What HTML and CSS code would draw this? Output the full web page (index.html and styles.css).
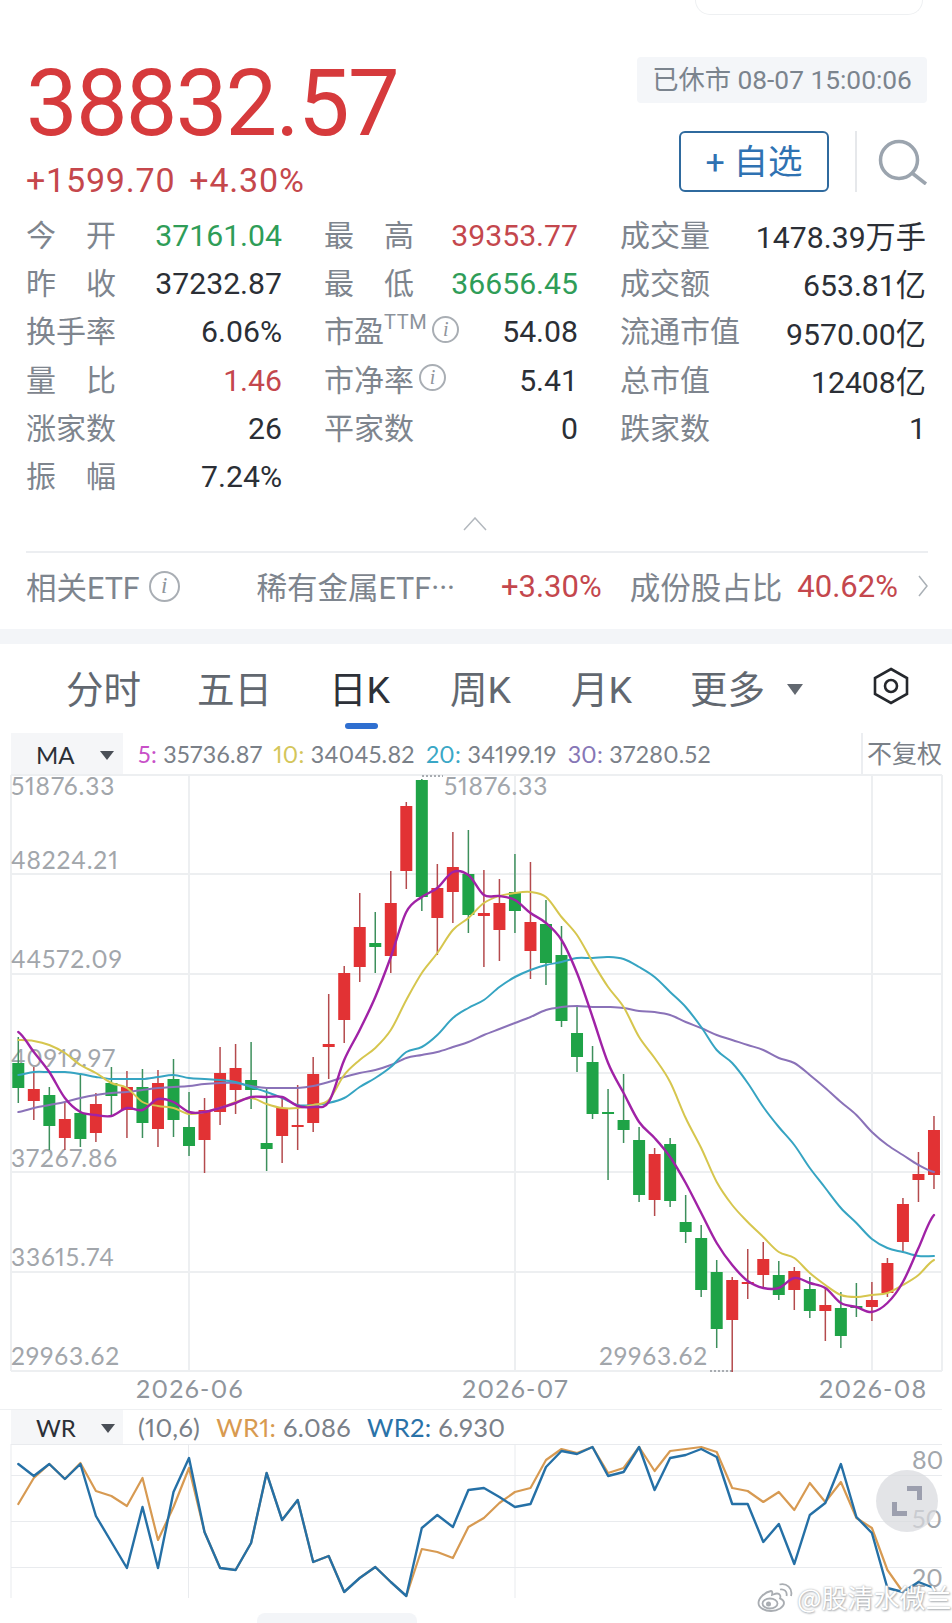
FILE: index.html
```html
<!DOCTYPE html>
<html lang="zh">
<head>
<meta charset="utf-8">
<title>行情</title>
<link rel="stylesheet" href="styles.css">
</head>
<body>
<main class="page">
  <div class="top-tab"></div>

  <section class="quote">
    <div class="quote-left">
      <div class="price">38832.57</div>
      <div class="change"><span>+1599.70</span><span>+4.30%</span></div>
    </div>
    <div class="quote-right">
      <div class="status">已休市 08-07 15:00:06</div>
      <div class="actions">
        <button class="watch"><span class="plus">+</span> 自选</button>
        <span class="vsep"></span>
        <svg class="search" viewBox="0 0 50 46" width="50" height="46"><circle cx="21" cy="21" r="18.5"/><path d="M34 34 L48 45"/></svg>
      </div>
    </div>
  </section>

  <section class="stats">
    <div class="stat"><span class="label two">今开</span><span class="value down">37161.04</span></div>
    <div class="stat"><span class="label two">最高</span><span class="value up">39353.77</span></div>
    <div class="stat"><span class="label">成交量</span><span class="value">1478.39万手</span></div>

    <div class="stat"><span class="label two">昨收</span><span class="value">37232.87</span></div>
    <div class="stat"><span class="label two">最低</span><span class="value down">36656.45</span></div>
    <div class="stat"><span class="label">成交额</span><span class="value">653.81亿</span></div>

    <div class="stat"><span class="label">换手率</span><span class="value">6.06%</span></div>
    <div class="stat"><span class="label">市盈<sup class="ttm">TTM</sup><i class="info small">i</i></span><span class="value">54.08</span></div>
    <div class="stat"><span class="label">流通市值</span><span class="value">9570.00亿</span></div>

    <div class="stat"><span class="label two">量比</span><span class="value up">1.46</span></div>
    <div class="stat"><span class="label">市净率<i class="info small">i</i></span><span class="value">5.41</span></div>
    <div class="stat"><span class="label">总市值</span><span class="value">12408亿</span></div>

    <div class="stat"><span class="label">涨家数</span><span class="value">26</span></div>
    <div class="stat"><span class="label">平家数</span><span class="value">0</span></div>
    <div class="stat"><span class="label">跌家数</span><span class="value">1</span></div>

    <div class="stat"><span class="label two">振幅</span><span class="value">7.24%</span></div>
  </section>

  <div class="collapse">
    <svg viewBox="0 0 24 14" width="24" height="14"><path d="M1 13 L12 1 L23 13"/></svg>
  </div>

  <section class="etf">
    <span class="etf-label">相关ETF<i class="info">i</i></span>
    <span class="etf-name">稀有金属ETF···</span>
    <span class="etf-pct up">+3.30%</span>
    <span class="etf-share">成份股占比</span>
    <span class="etf-ratio up">40.62%</span>
    <svg class="etf-arrow" viewBox="0 0 10 22" width="10" height="22"><path d="M1 1 L9 11 L1 21"/></svg>
  </section>

  <div class="band"></div>

  <nav class="tabs">
    <span class="tab">分时</span>
    <span class="tab">五日</span>
    <span class="tab active">日K</span>
    <span class="tab">周K</span>
    <span class="tab">月K</span>
    <span class="tab more">更多<b class="caret"></b></span>
    <svg class="hex" viewBox="0 0 36 38" width="36" height="38"><path d="M18 2 L34 11 L34 27 L18 36 L2 27 L2 11 Z"/><circle cx="18" cy="19" r="6"/></svg>
  </nav>

  <section class="charts">
    <div class="legend main-legend">
      <div class="picker">MA<b class="tri"></b></div>
      <div class="legend-items">
        <span><em class="c5">5:</em> 35736.87</span>
        <span><em class="c10">10:</em> 34045.82</span>
        <span><em class="c20">20:</em> 34199.19</span>
        <span><em class="c30">30:</em> 37280.52</span>
      </div>
      <div class="adjust">不复权</div>
    </div>

    <svg id="kline" class="kline" viewBox="0 775 952 634" width="952" height="634">
      <g class="grid">
        <path d="M11 775H942 M11 874H942 M11 974H942 M11 1073H942 M11 1172H942 M11 1272H942 M11 1371H942"/>
        <path d="M11 775V1371 M189 775V1371 M515 775V1371 M872 775V1371 M942 775V1371"/>
      </g>
      <g class="axis">
        <text x="11" y="795">51876.33</text>
        <text x="11" y="869">48224.21</text>
        <text x="11" y="968">44572.09</text>
        <text x="11" y="1067">40919.97</text>
        <text x="11" y="1167">37267.86</text>
        <text x="11" y="1266">33615.74</text>
        <text x="11" y="1365">29963.62</text>
        <text x="444" y="795">51876.33</text>
        <text x="599" y="1365">29963.62</text>
      </g>
      <path class="leader" d="M422 776H443 M710 1371H732"/>
      <g class="dates">
        <text x="136" y="1398">2026-06</text>
        <text x="462" y="1398">2026-07</text>
        <text x="819" y="1398">2026-08</text>
      </g>
    </svg>

    <div class="legend wr-legend">
      <div class="picker">WR<b class="tri"></b></div>
      <div class="legend-items">
        <span>(10,6)</span>
        <span><em class="c-wr1">WR1:</em> 6.086</span>
        <span><em class="c-wr2">WR2:</em> 6.930</span>
      </div>
    </div>

    <svg id="wr" class="wr" viewBox="0 1444 952 179" width="952" height="179">
      <g class="grid thin">
        <path d="M11 1444.5H942 M11 1475.5H942 M11 1521.5H942 M11 1567.5H942"/>
        <path d="M11 1444V1598 M188.5 1444V1598 M515 1444V1598"/>
      </g>
      <g class="wr-axis">
        <text x="912" y="1469">80</text>
        <text x="912" y="1528">50</text>
        <text x="912" y="1587">20</text>
      </g>
    </svg>

    <button class="expand" aria-label="全屏">
      <svg viewBox="0 0 32 32" width="32" height="32"><path d="M16 1H31V15H26V6H16Z"/><path d="M1 17H6V26H16V31H1Z"/></svg>
    </button>

    <div class="watermark">
      <svg viewBox="0 0 36 30" width="36" height="30"><path class="wb" d="M14 9C8 10 1.500 16 1.500 21C1.500 26 8 29 14 29C21 29 27 25 27 21C27 18 24 17 23 16.500C24 14 23 11.500 20 11.500C18 11.500 16.500 12.500 15 13C15.500 10.500 15.500 9 14 9Z"/><ellipse class="wb" cx="13" cy="21.500" rx="7.500" ry="5"/><circle class="wb-dot" cx="11.500" cy="22" r="2.500"/><path class="wb" d="M23 7.500C27 6.500 30.500 9.500 29.500 14 M22.500 2.500C29.500 0.500 36 6.500 34 14"/></svg>
      <span>@股清水微兰</span>
    </div>

    <div class="home-bar"></div>
  </section>
</main>
<script src="chart.js"></script>
</body>
</html>
```

FILE: styles.css
```css
* { box-sizing: border-box; }
html, body { margin: 0; padding: 0; background: #fff; }
body {
  width: 952px;
  height: 1623px;
  overflow: hidden;
  font-family: Roboto, "Noto Sans CJK SC", sans-serif;
  color: #2b2f36;
}
.page { width: 952px; }

.top-tab {
  width: 228px;
  height: 15px;
  margin-left: 695px;
  border: 1px solid #eef0f2;
  border-top: 0;
  border-radius: 0 0 26px 26px;
}

.quote {
  height: 196px;
  display: flex;
  justify-content: space-between;
  padding-left: 26px;
}
.price {
  margin-top: 43px;
  font-size: 92px;
  line-height: 92px;
  letter-spacing: -1.800px;
  color: #d63a3c;
}
.change {
  display: flex;
  gap: 14px;
  margin-top: 11px;
  font-size: 34px;
  line-height: 38px;
  letter-spacing: .8px;
  color: #c5474c;
}
.quote-right { width: 315px; }
.status {
  margin-top: 42px;
  width: 290px;
  height: 46px;
  border-radius: 4px;
  background: #f4f6f9;
  color: #7b848e;
  font-size: 26.300px;
  line-height: 46px;
  text-align: center;
  white-space: nowrap;
}
.actions {
  display: flex;
  align-items: center;
  margin-top: 28px;
  margin-left: 42px;
  height: 61px;
}
.watch {
  width: 150px;
  height: 61px;
  padding: 0;
  border: 2px solid #2f6a9e;
  border-radius: 6px;
  background: #fff;
  color: #2f72b2;
  font: inherit;
  font-size: 34.500px;
  line-height: 54px;
}
.plus { font-size: 34px; }
.vsep {
  width: 2px;
  height: 61px;
  margin-left: 26px;
  background: #e6e8eb;
}
.search {
  margin-left: 21px;
  fill: none;
  stroke: #9ba4ae;
  stroke-width: 3.500;
}

.stats {
  display: grid;
  grid-template-columns: 256px 254px 306px;
  column-gap: 42px;
  grid-auto-rows: 48.300px;
  padding-left: 26px;
  height: 290px;
}
.stat {
  display: flex;
  justify-content: space-between;
  align-items: center;
  white-space: nowrap;
}
.label {
  display: flex;
  align-items: center;
  margin-top: -5px;
  color: #7e858e;
  font-size: 30px;
}
.label.two {
  display: block;
  width: 90px;
  text-align-last: justify;
}
.value { font-size: 30.200px; color: #2b2f36; }
.value.up, .up { color: #c4474d; }
.value.down { color: #2f9d58; }
.ttm {
  align-self: flex-start;
  font-size: 20px;
  line-height: 28px;
  margin-top: 1px;
  color: #8c939b;
  letter-spacing: .6px;
}
.info {
  display: inline-block;
  flex: none;
  width: 31px;
  height: 31px;
  margin-left: 9px;
  border: 2px solid #a9aeb4;
  border-radius: 50%;
  color: #8f959c;
  font-family: "Liberation Serif", serif;
  font-size: 23px;
  line-height: 26px;
  text-align: center;
}
.info.small {
  width: 27px;
  height: 27px;
  margin-left: 5px;
  font-size: 20px;
  line-height: 23px;
}

.collapse {
  height: 50px;
  padding: 16px 0 0 463px;
}
.collapse svg { display: block; fill: none; stroke: #b3b8be; stroke-width: 1.500; }

.etf {
  height: 78px;
  margin: 0 24px 0 26px;
  padding-bottom: 10px;
  border-top: 2px solid #eceef1;
  display: flex;
  align-items: center;
  font-size: 30.500px;
  color: #7e858e;
  white-space: nowrap;
}
.etf-label { width: 231px; display: flex; align-items: center; }
.etf-name { width: 245px; }
.etf-pct { width: 129px; font-size: 31px; }
.etf-share { width: 168px; }
.etf-ratio { width: 121px; font-size: 31px; }
.etf-arrow { fill: none; stroke: #aab0b6; stroke-width: 1.500; }

.band { height: 15px; background: #f3f5f8; }

.tabs {
  position: relative;
  height: 89px;
  padding: 0 43px 5px 66px;
  display: grid;
  grid-template-columns: 131px 132px 121px 121px 119px 1fr auto;
  align-items: center;
  font-size: 37.500px;
  color: #626870;
}
.tab { white-space: nowrap; }
.tab.active { color: #2d3138; }
.tab.active::after {
  content: "";
  position: absolute;
  left: 345px;
  top: 79px;
  width: 33px;
  height: 6px;
  border-radius: 3px;
  background: #2f6fd0;
}
.more { display: flex; align-items: center; }
.caret {
  margin: 6px 0 0 22px;
  border: 8px solid transparent;
  border-top: 11px solid #626870;
  border-bottom: 0;
}
.hex { fill: none; stroke: #25282d; stroke-width: 2.600; }

.charts {
  position: relative;
  font-family: Lato, "Noto Sans CJK SC", sans-serif;
  font-variant-numeric: proportional-nums;
}
.legend {
  display: flex;
  align-items: center;
  font-size: 23.300px;
  letter-spacing: .3px;
  color: #7a8088;
  white-space: nowrap;
}
.legend em { font-style: normal; }
.main-legend { height: 42px; margin-right: 10px; }
.wr-legend {
  height: 35px;
  margin-right: 10px;
  border-top: 1px solid #eef0f2;
  font-size: 25.500px;
}
.picker {
  width: 112px;
  height: 100%;
  margin-left: 11px;
  padding-left: 25px;
  display: flex;
  align-items: center;
  background: #f5f6f8;
  color: #2b2f36;
  font-size: 24px;
  letter-spacing: 0;
}
.tri {
  margin: 3px 0 0 25px;
  border: 7px solid transparent;
  border-top: 9px solid #4a4f57;
  border-bottom: 0;
}
.legend-items { display: flex; margin-left: 15px; gap: 11px; flex: 1; }
.wr-legend .legend-items { gap: 16px; }
.c5 { color: #c850c8; }
.c10 { color: #d4c65a; }
.c20 { color: #3aa7c6; }
.c30 { color: #8676b6; }
.c-wr1 { color: #d89a50; }
.c-wr2 { color: #2a72a8; }
.adjust {
  width: 81px;
  height: 100%;
  padding-left: 4px;
  border-left: 2px solid #eceef1;
  line-height: 38px;
  font-size: 25px;
  letter-spacing: 0;
  color: #7a8088;
  font-family: "Noto Sans CJK SC", sans-serif;
}

svg.kline, svg.wr { display: block; overflow: visible; }
.grid path { fill: none; stroke: #edeff1; stroke-width: 2; }
.grid.thin path { stroke: #e9ebee; stroke-width: 1; }
.axis text { fill: #a2a6ab; font-size: 24.500px; letter-spacing: .9px; }
.dates text { fill: #8f959c; font-size: 25px; letter-spacing: 1.300px; }
.wr-axis text { fill: #a2a6ab; font-size: 25px; }
.leader { fill: none; stroke: #a8acb1; stroke-width: 2; stroke-dasharray: 2 2; }

.expand {
  position: absolute;
  left: 876px;
  top: 737px;
  width: 62px;
  height: 62px;
  padding: 0;
  border: 0;
  border-radius: 50%;
  background: rgba(216, 218, 222, .72);
  display: flex;
  align-items: center;
  justify-content: center;
}
.expand path { fill: #9c9fae; }

.watermark {
  position: absolute;
  left: 757px;
  top: 849px;
  display: flex;
  align-items: center;
  gap: 4px;
  color: #fff;
  font-family: "Noto Sans CJK SC", sans-serif;
  font-size: 26px;
  line-height: 30px;
  white-space: nowrap;
  text-shadow: 0 0 2px #a0a4a9, 1px 1px 2px #b4b7bb;
}
.wb { fill: none; stroke: #a9adb2; stroke-width: 1.800; }
.wb-dot { fill: #a9adb2; }

.home-bar {
  position: absolute;
  left: 257px;
  top: 880px;
  width: 160px;
  height: 12px;
  border-radius: 8px 8px 0 0;
  background: #f3f5f8;
}
```

FILE: chart.js
```js
// Candle rows: wick top, body top, body bottom, wick bottom, colour. All in page pixels.
var candles = [
  [1037,1063,1088,1103,'g'],[1067,1089,1101,1120,'r'],[1087,1095,1126,1150,'g'],[1103,1119,1138,1150,'r'],
  [1073,1113,1139,1147,'g'],[1093,1104,1133,1142,'r'],[1067,1083,1096,1115,'g'],[1071,1087,1110,1138,'r'],
  [1069,1087,1123,1138,'g'],[1070,1083,1129,1147,'r'],[1059,1079,1120,1137,'g'],[1092,1127,1146,1156,'g'],
  [1098,1110,1140,1173,'r'],[1047,1073,1112,1125,'r'],[1044,1068,1090,1114,'r'],[1042,1080,1090,1109,'g'],
  [1088,1143,1149,1171,'g'],[1098,1108,1136,1163,'r'],[1085,1125,1127,1150,'r'],[1057,1074,1123,1132,'r'],
  [994,1044,1047,1079,'r'],[966,973,1020,1043,'r'],[893,927,967,982,'r'],[912,943,947,973,'g'],
  [871,903,956,973,'r'],[802,806,871,889,'r'],[779,780,897,911,'g'],[864,888,918,955,'r'],
  [832,867,892,923,'r'],[830,874,915,933,'g'],[870,913,916,967,'r'],[879,903,930,961,'r'],
  [854,892,911,933,'g'],[862,922,951,979,'r'],[900,924,963,985,'g'],[926,955,1021,1027,'g'],
  [1007,1033,1057,1072,'g'],[1046,1062,1114,1119,'g'],[1089,1112,1114,1180,'g'],[1074,1120,1130,1143,'g'],
  [1127,1140,1195,1202,'g'],[1148,1154,1200,1216,'r'],[1138,1144,1201,1207,'g'],[1195,1222,1232,1243,'g'],
  [1225,1238,1290,1297,'g'],[1260,1272,1329,1348,'g'],[1277,1280,1320,1372,'r'],[1249,1282,1284,1299,'r'],
  [1242,1259,1275,1288,'r'],[1261,1275,1295,1300,'g'],[1267,1271,1290,1310,'r'],[1277,1289,1311,1318,'g'],
  [1287,1305,1311,1341,'r'],[1292,1308,1336,1348,'g'],[1283,1306,1307,1317,'g'],[1282,1300,1307,1321,'r'],
  [1258,1263,1293,1297,'r'],[1198,1204,1242,1253,'r'],[1152,1174,1180,1202,'r'],[1116,1130,1175,1189,'r']
];
var ma5 = [1032,1052,1072,1098,1112,1115,1116,1108,1110,1099,1102,1112,1112,1108,1103,1097,1097,1097,1106,1107,1102,1060,1030,997,957,912,897,888,872,875,895,896,900,913,923,940,973,1017,1063,1093,1122,1138,1157,1183,1213,1243,1265,1281,1288,1288,1278,1283,1288,1303,1307,1312,1303,1282,1248,1215];
var ma10 = [1040,1041,1045,1053,1065,1073,1083,1088,1102,1106,1108,1114,1112,1108,1102,1098,1104,1108,1108,1105,1100,1075,1060,1048,1030,1000,973,953,930,918,903,896,893,892,897,917,935,962,987,1007,1037,1058,1082,1118,1148,1182,1205,1222,1237,1252,1258,1273,1285,1295,1297,1295,1293,1285,1275,1260];
var ma20 = [1075,1072,1072,1072,1074,1077,1079,1079,1079,1077,1075,1078,1079,1080,1082,1087,1092,1098,1105,1105,1103,1098,1087,1078,1067,1052,1047,1035,1018,1008,1000,987,977,970,965,962,958,958,957,959,967,977,992,1007,1027,1050,1063,1083,1107,1127,1145,1168,1188,1208,1223,1239,1248,1252,1256,1256];
var ma30 = [1112,1108,1105,1102,1098,1095,1093,1092,1090,1088,1087,1086,1084,1083,1083,1086,1088,1088,1088,1086,1082,1077,1073,1070,1065,1058,1055,1052,1047,1042,1035,1029,1023,1017,1010,1007,1006,1007,1007,1008,1011,1012,1015,1022,1028,1035,1040,1045,1050,1058,1063,1075,1088,1102,1115,1132,1145,1155,1165,1172];
var wr2 = [1464,1476,1464,1479,1464,1516,1542,1568,1507,1568,1492,1458,1532,1568,1570,1543,1473,1520,1500,1562,1556,1592,1578,1567,1582,1596,1528,1515,1527,1490,1488,1497,1507,1504,1467,1451,1454,1447,1476,1472,1447,1490,1458,1455,1449,1457,1504,1504,1542,1524,1564,1515,1503,1464,1517,1533,1588,1592,1582,1588];
var wr1 = [1504,1478,1464,1479,1463,1491,1496,1506,1478,1540,1507,1468,1532,1568,1570,1543,1473,1520,1500,1562,1556,1592,1578,1567,1582,1596,1549,1552,1558,1527,1518,1503,1492,1488,1460,1449,1453,1447,1473,1468,1447,1471,1451,1449,1447,1452,1488,1491,1502,1492,1510,1483,1502,1482,1518,1528,1570,1592];

var NS = 'http://www.w3.org/2000/svg';
function px(i) { return 18.3 + i * 15.52; }
function add(svg, name, attrs) {
  var el = document.createElementNS(NS, name);
  for (var k in attrs) el.setAttribute(k, attrs[k]);
  svg.appendChild(el);
  return el;
}
// Catmull-Rom through the points, so the moving averages read as curves.
function smooth(values) {
  var d = 'M' + px(0).toFixed(1) + ' ' + values[0];
  for (var i = 0; i < values.length - 1; i++) {
    var y0 = values[Math.max(i - 1, 0)], y1 = values[i], y2 = values[i + 1];
    var y3 = values[Math.min(i + 2, values.length - 1)];
    var x1 = px(i), x2 = px(i + 1), dx = (x2 - x1) / 3;
    d += 'C' + (x1 + dx).toFixed(1) + ' ' + (y1 + (y2 - y0) / 6).toFixed(1) + ' ' +
      (x2 - dx).toFixed(1) + ' ' + (y2 - (y3 - y1) / 6).toFixed(1) + ' ' +
      x2.toFixed(1) + ' ' + y2;
  }
  return d;
}
function curve(svg, values, colour, width) {
  add(svg, 'path', {
    d: smooth(values), fill: 'none', stroke: colour,
    'stroke-width': width, 'stroke-linejoin': 'round', 'stroke-linecap': 'round'
  });
}
function line(svg, values, colour, width) {
  var pts = values.map(function (y, i) { return px(i).toFixed(1) + ',' + y; }).join(' ');
  add(svg, 'polyline', {
    points: pts, fill: 'none', stroke: colour,
    'stroke-width': width, 'stroke-linejoin': 'round', 'stroke-linecap': 'round'
  });
}

var kline = document.getElementById('kline');
candles.forEach(function (c, i) {
  var x = px(i), red = c[4] === 'r';
  add(kline, 'line', {
    x1: x, x2: x, y1: c[0], y2: c[3],
    stroke: red ? '#b44a4d' : '#3d8f5c', 'stroke-width': 1.5
  });
  add(kline, 'rect', {
    x: x - 6, y: c[1], width: 12, height: Math.max(c[2] - c[1], 2),
    fill: red ? '#e23234' : '#1fa347'
  });
});
curve(kline, ma30, '#8a72b8', 2);
curve(kline, ma20, '#36a4c2', 2);
curve(kline, ma10, '#d6c64e', 2);
curve(kline, ma5, '#a022a6', 2.4);

var wr = document.getElementById('wr');
line(wr, wr1, '#d79a52', 2.2);
line(wr, wr2, '#2570a6', 2.4);
```
